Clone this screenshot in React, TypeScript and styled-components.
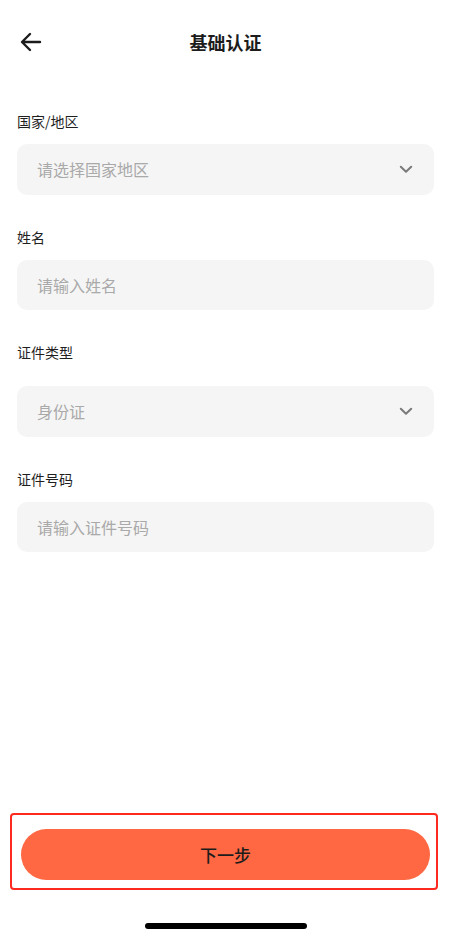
import styled, { createGlobalStyle } from 'styled-components';

const GlobalStyle = createGlobalStyle`
  html, body {
    margin: 0;
    padding: 0;
    background: #ffffff;
  }
  body {
    font-family: "Noto Sans CJK SC", "Noto Sans", sans-serif;
    color: #1f1f1f;
  }
`;

const Page = styled.div`
  width: 451px;
  height: 936px;
  display: flex;
  flex-direction: column;
  box-sizing: border-box;
  background: #ffffff;
`;

const Header = styled.div`
  height: 84px;
  display: grid;
  grid-template-columns: 60px 1fr 60px;
  align-items: center;
`;

const BackButton = styled.button`
  border: none;
  background: none;
  padding: 0 0 0 20px;
  display: flex;
  align-items: center;
  cursor: pointer;
`;

const Title = styled.h1`
  margin: 0;
  text-align: center;
  font-size: 18px;
  font-weight: 700;
  color: #1c1c1c;
`;

const Form = styled.div`
  display: flex;
  flex-direction: column;
  padding: 27px 17px 0;
  flex: 1;
`;

const FieldGroup = styled.div`
  display: flex;
  flex-direction: column;
  margin-bottom: 32px;
`;

const Label = styled.label<{ $gap: number }>`
  font-size: 14px;
  line-height: 20px;
  color: #1f1f1f;
  margin-bottom: ${p => p.$gap}px;
`;

const Field = styled.div`
  height: 50.5px;
  border-radius: 10px;
  background: #f5f5f5;
  display: flex;
  align-items: center;
  justify-content: space-between;
  padding: 0 21px 0 20px;
`;

const Placeholder = styled.span`
  font-size: 16px;
  color: #a9a9a9;
`;

const Footer = styled.div`
  display: flex;
  flex-direction: column;
  padding-bottom: 7px;
`;

const Highlight = styled.div`
  width: 428px;
  margin-left: 10px;
  box-sizing: border-box;
  border: 2px solid #ff2a1f;
  border-radius: 4px;
  padding: 14px 6px 8px 9px;
`;

const NextButton = styled.button`
  width: 100%;
  height: 51px;
  border: none;
  border-radius: 26px;
  background: #ff6842;
  font-family: "Noto Sans CJK SC", "Noto Sans", sans-serif;
  font-size: 17px;
  font-weight: 500;
  color: #1c1c1c;
  cursor: pointer;
`;

const HomeIndicator = styled.div`
  align-self: center;
  width: 162px;
  height: 6px;
  border-radius: 3px;
  background: #000000;
  margin-top: 33px;
`;

const Chevron = () => (
  <svg width="14" height="9" viewBox="0 0 14 9" fill="none">
    <path d="M1.8 1.8L7 6.8L12.2 1.8" stroke="#7a7a7a" strokeWidth="2" strokeLinecap="round" strokeLinejoin="round" />
  </svg>
);

const fields = [
  { label: '国家/地区', placeholder: '请选择国家地区', select: true, gap: 13 },
  { label: '姓名', placeholder: '请输入姓名', select: false, gap: 13 },
  { label: '证件类型', placeholder: '身份证', select: true, gap: 24 },
  { label: '证件号码', placeholder: '请输入证件号码', select: false, gap: 13 },
];

export default function App() {
  return (
    <Page>
      <GlobalStyle />
      <Header>
        <BackButton aria-label="back">
          <svg width="22" height="20" viewBox="0 0 22 20" fill="none">
            <path d="M20 10H2.5M10 2L2 10L10 18" stroke="#1c1c1c" strokeWidth="2.4" strokeLinecap="round" strokeLinejoin="round" />
          </svg>
        </BackButton>
        <Title>基础认证</Title>
        <div />
      </Header>
      <Form>
        {fields.map(f => (
          <FieldGroup key={f.label}>
            <Label $gap={f.gap}>{f.label}</Label>
            <Field>
              <Placeholder>{f.placeholder}</Placeholder>
              {f.select && <Chevron />}
            </Field>
          </FieldGroup>
        ))}
      </Form>
      <Footer>
        <Highlight>
          <NextButton>下一步</NextButton>
        </Highlight>
        <HomeIndicator />
      </Footer>
    </Page>
  );
}
